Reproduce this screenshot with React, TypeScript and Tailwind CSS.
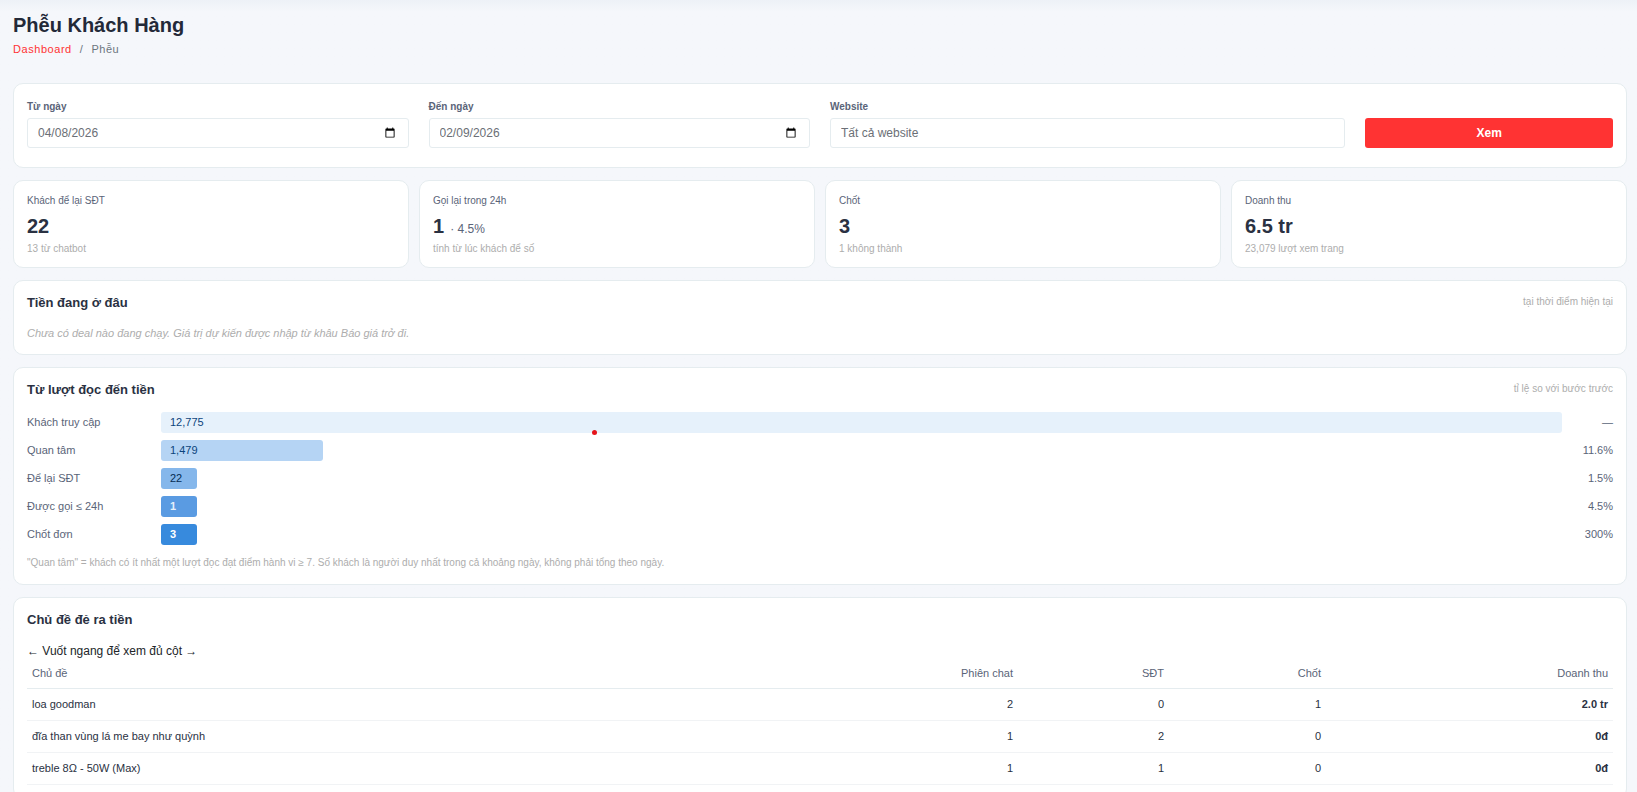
import { ReactNode } from "react";

const kpis = [
  { label: "Khách để lại SĐT", value: "22", hint: "13 từ chatbot" },
  { label: "Gọi lại trong 24h", value: "1", extra: "· 4.5%", hint: "tính từ lúc khách để số" },
  { label: "Chốt", value: "3", hint: "1 không thành" },
  { label: "Doanh thu", value: "6.5 tr", hint: "23,079 lượt xem trang" },
];

const steps = [
  { label: "Khách truy cập", count: 12775, rate: "—", tone: "bg-[#e6f1fb] text-[#0c447c]", marker: true },
  { label: "Quan tâm", count: 1479, rate: "11.6%", tone: "bg-[#b5d4f4] text-[#0c447c]" },
  { label: "Để lại SĐT", count: 22, rate: "1.5%", tone: "bg-[#85b7eb] text-[#042c53]" },
  { label: "Được gọi ≤ 24h", count: 1, rate: "4.5%", tone: "bg-[#5a9be2] text-[#e6f1fb] font-bold" },
  { label: "Chốt đơn", count: 3, rate: "300%", tone: "bg-[#378add] text-white font-bold" },
];

const topics = [
  { name: "loa goodman", chats: 2, phones: 0, won: 1, revenue: "2.0 tr" },
  { name: "đĩa than vùng lá me bay như quỳnh", chats: 1, phones: 2, won: 0, revenue: "0đ" },
  { name: "treble 8Ω - 50W (Max)", chats: 1, phones: 1, won: 0, revenue: "0đ" },
];

const card = "rounded-[10px] border border-[#e5ecef] bg-white px-[13px]";
const field =
  "h-[30px] w-full rounded-[3px] border border-[#e5ecef] bg-white px-[10px] text-[12px] text-[#6b6f76] outline-none";
const dateField =
  "[&::-webkit-datetime-edit-text]:p-0 [&::-webkit-datetime-edit-day-field]:p-0 [&::-webkit-datetime-edit-month-field]:p-0 [&::-webkit-datetime-edit-year-field]:p-0";
const fieldLabel = "mb-0.5 block text-[10px] leading-[19px] font-bold text-[#5a6478]";

function Panel({ title, note, children }: { title: string; note?: string; children: ReactNode }) {
  return (
    <section className={`${card} pt-3 pb-[13px]`}>
      <div className="mb-3 flex items-start justify-between">
        <h2 className="text-[13px] leading-5 font-bold text-[#2a3142]">{title}</h2>
        {note && <span className="text-[10px] leading-[18px] text-[#adadad]">{note}</span>}
      </div>
      {children}
    </section>
  );
}

export default function App() {
  const max = steps[0].count;
  return (
    <main className="min-h-screen bg-[#f5f7fb] bg-linear-to-b from-[#edf1f7] from-0% to-[#f5f7fb] to-[12px] pt-[13px] pr-[10px] pl-[13px] font-['Liberation_Sans',Arial,sans-serif] text-[#2a3142]">
      <header className="mb-[26px]">
        <h1 className="text-[20px] leading-6 font-bold text-[#232938]">Phễu Khách Hàng</h1>
        <nav aria-label="Breadcrumb" className="mt-1 flex gap-2 text-[11px] leading-4 tracking-wider text-[#6c757d]">
          <a href="#dashboard" className="text-[#ff3333]">
            Dashboard
          </a>
          <span>/</span>
          <span>Phễu</span>
        </nav>
      </header>

      <div className="flex flex-col gap-3">
        <form
          className={`${card} grid grid-cols-12 items-end gap-5 pt-[13px] pb-[19px]`}
          onSubmit={(e) => e.preventDefault()}
        >
          <div className="col-span-3">
            <label htmlFor="from" className={fieldLabel}>
              Từ ngày
            </label>
            <input id="from" type="date" defaultValue="2026-04-08" className={`${field} ${dateField}`} />
          </div>
          <div className="col-span-3">
            <label htmlFor="to" className={fieldLabel}>
              Đến ngày
            </label>
            <input id="to" type="date" defaultValue="2026-02-09" className={`${field} ${dateField}`} />
          </div>
          <div className="col-span-4">
            <label htmlFor="site" className={fieldLabel}>
              Website
            </label>
            <select id="site" className={`${field} appearance-none`}>
              <option>Tất cả website</option>
            </select>
          </div>
          <button type="submit" className="col-span-2 h-[30px] rounded-[3px] bg-[#ff3333] text-[12px] font-bold text-white">
            Xem
          </button>
        </form>

        <div className="grid grid-cols-4 gap-2.5">
          {kpis.map((k) => (
            <section key={k.label} className={`${card} pt-3 pb-2.5`}>
              <h2 className="text-[10px] leading-4 text-[#5a6478]">{k.label}</h2>
              <p className="mt-1 text-[20px] leading-[26px] font-bold">
                {k.value}
                {k.extra && (
                  <span className="ml-1.5 text-[12px] leading-none font-normal text-[#5a6478]">{k.extra}</span>
                )}
              </p>
              <p className="mt-0.5 text-[10px] leading-4 text-[#adadad]">{k.hint}</p>
            </section>
          ))}
        </div>

        <Panel title="Tiền đang ở đâu" note="tại thời điểm hiện tại">
          <p className="text-[11px] leading-4 text-[#adadad] italic">
            Chưa có deal nào đang chạy. Giá trị dự kiến được nhập từ khâu Báo giá trở đi.
          </p>
        </Panel>

        <Panel title="Từ lượt đọc đến tiền" note="tỉ lệ so với bước trước">
          <ul className="flex flex-col gap-[7px]">
            {steps.map((s) => (
              <li key={s.label} className="grid grid-cols-[125px_1fr_42px] items-center gap-[9px] text-[11px] leading-[21px]">
                <span className="text-[#5a6478]">{s.label}</span>
                <div className="relative">
                  <div
                    className={`h-[21px] min-w-9 rounded-[3px] pl-[9px] ${s.tone}`}
                    style={{ width: `${(s.count / max) * 100}%` }}
                  >
                    {s.count.toLocaleString("en-US")}
                  </div>
                  {s.marker && <span className="absolute -bottom-0.5 left-[30.75%] size-[5px] rounded-full bg-[#e5141b]" />}
                </div>
                <span className="text-right text-[#5a6478]">{s.rate}</span>
              </li>
            ))}
          </ul>
          <p className="mt-2.5 text-[10px] leading-4 text-[#adadad]">
            "Quan tâm" = khách có ít nhất một lượt đọc đạt điểm hành vi ≥ 7. Số khách là người duy nhất trong cả khoảng
            ngày, không phải tổng theo ngày.
          </p>
        </Panel>

        <Panel title="Chủ đề đẻ ra tiền">
          <p className="text-[12px] leading-[18px] text-[#212529]">← Vuốt ngang để xem đủ cột →</p>
          <table className="w-full text-[11px]">
            <thead>
              <tr className="border-b border-[#e5ecef] leading-4 text-[#5a6478]">
                <th className="px-[5px] pt-[5px] pb-[7px] text-left font-normal">Chủ đề</th>
                <th className="px-[5px] pt-[5px] pb-[7px] text-right font-normal">Phiên chat</th>
                <th className="w-[151px] px-[5px] pt-[5px] pb-[7px] text-right font-normal">SĐT</th>
                <th className="w-[157px] px-[5px] pt-[5px] pb-[7px] text-right font-normal">Chốt</th>
                <th className="w-[287px] px-[5px] pt-[5px] pb-[7px] text-right font-normal">Doanh thu</th>
              </tr>
            </thead>
            <tbody>
              {topics.map((t) => (
                <tr key={t.name} className="border-b border-[#f1f3f5] leading-[17px]">
                  <td className="px-[5px] py-[7px]">{t.name}</td>
                  <td className="px-[5px] py-[7px] text-right">{t.chats}</td>
                  <td className="px-[5px] py-[7px] text-right">{t.phones}</td>
                  <td className="px-[5px] py-[7px] text-right">{t.won}</td>
                  <td className="px-[5px] py-[7px] text-right font-bold">{t.revenue}</td>
                </tr>
              ))}
            </tbody>
          </table>
        </Panel>
      </div>
    </main>
  );
}
